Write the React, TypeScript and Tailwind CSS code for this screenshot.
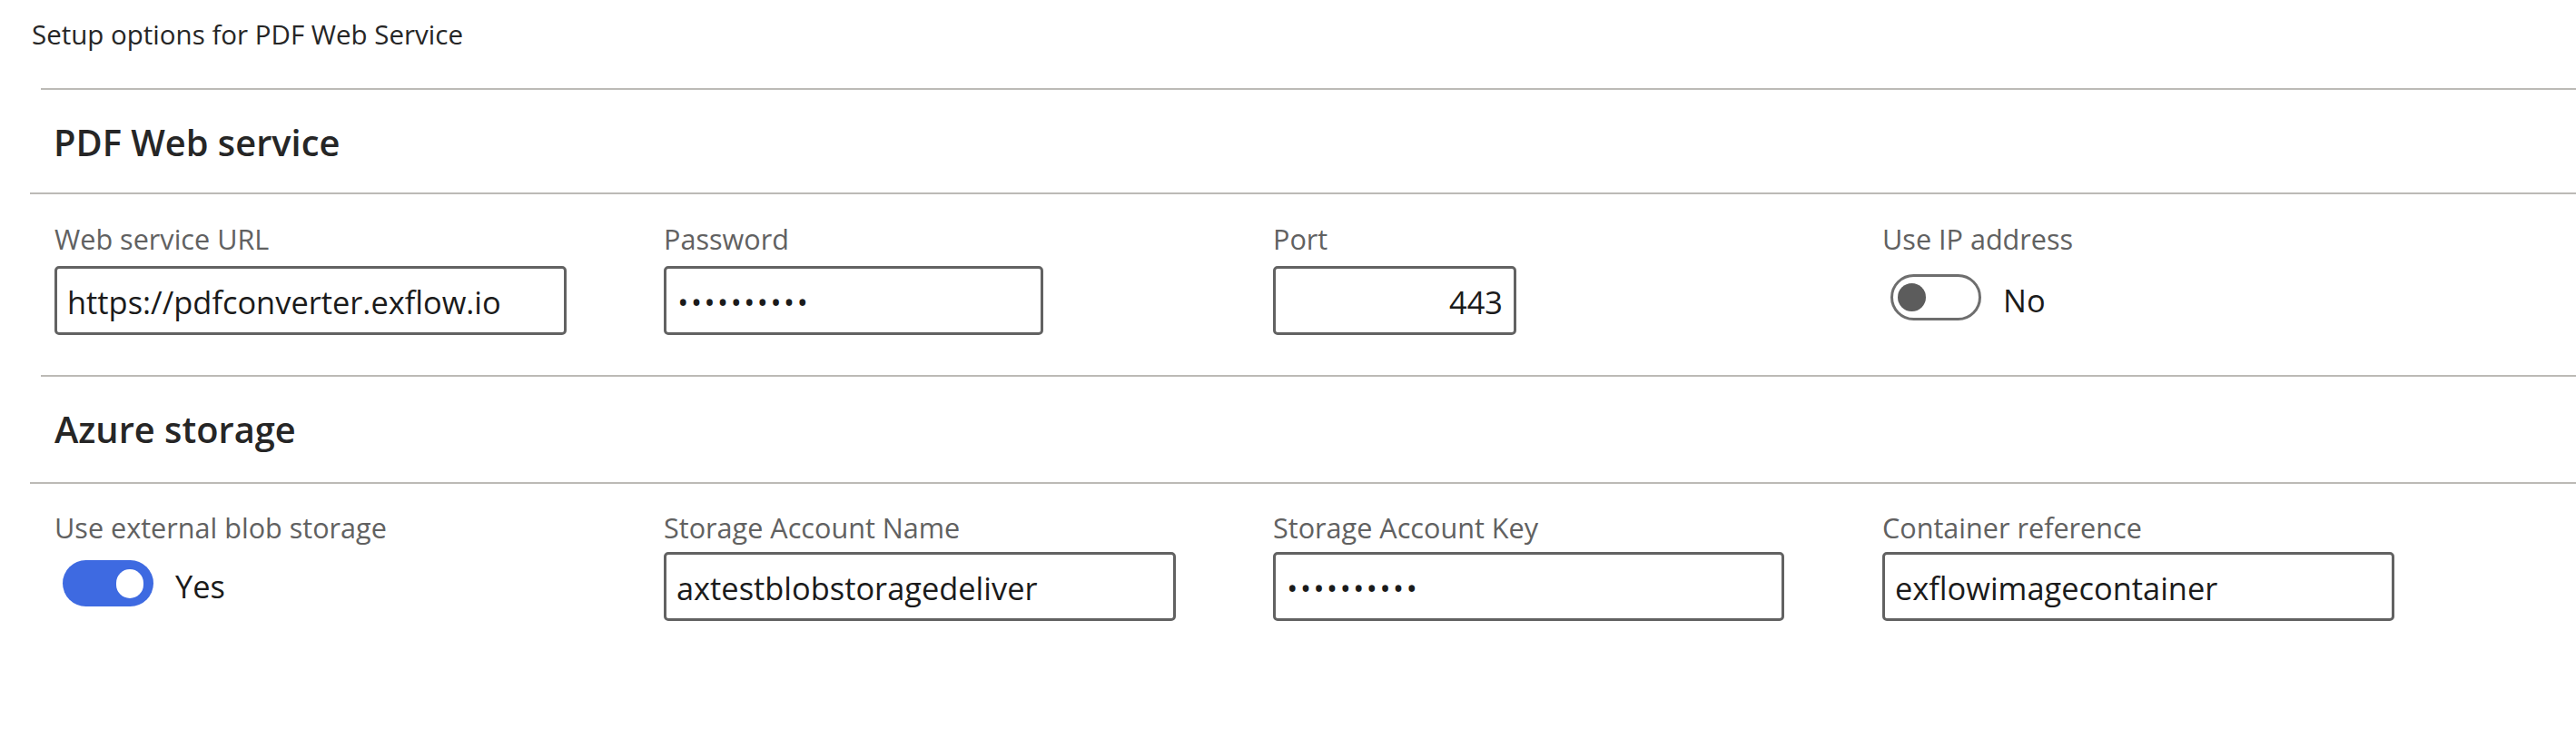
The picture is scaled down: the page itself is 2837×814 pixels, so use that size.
import React from "react";

function Label({ text }: { text: string }) {
  return (
    <div className="text-[30.6px] leading-[40px] text-[#616161] whitespace-nowrap">
      {text}
    </div>
  );
}

function Dots() {
  const items = Array.from({ length: 10 });
  return (
    <span className="flex text-[32px] leading-[40px] text-[#1b1b1b]">
      {items.map((_, i) => (
        <span key={i} className="inline-block w-[14.6px] text-center">
          •
        </span>
      ))}
    </span>
  );
}

function TextBox({
  value,
  widthClass,
  right,
  password,
}: {
  value: string;
  widthClass: string;
  right?: boolean;
  password?: boolean;
}) {
  return (
    <div
      className={
        "h-[76px] border-[3px] border-[#626262] rounded-[5px] bg-white flex items-center pt-[4px] pl-[11px] pr-[12px] whitespace-nowrap overflow-hidden " +
        widthClass +
        (right ? " justify-end" : "")
      }
    >
      {password ? (
        <Dots />
      ) : (
        <span className="text-[34.4px] leading-[44px] text-[#1b1b1b]">{value}</span>
      )}
    </div>
  );
}

function Toggle({ on }: { on: boolean }) {
  return (
    <div className="ml-[9px] flex items-start">
      {on ? (
        <div className="w-[100px] h-[51px] rounded-full bg-[#3e6ae1] flex items-center justify-end pr-[11px]">
          <div className="w-[30px] h-[32px] rounded-full bg-white" />
        </div>
      ) : (
        <div className="w-[100px] h-[51px] rounded-full border-[3px] border-[#6e6e6e] bg-white flex items-center pl-[5px]">
          <div className="w-[31px] h-[31px] rounded-full bg-[#5c5c5c]" />
        </div>
      )}
      <span className="ml-[24px] mt-[3px] text-[34.4px] leading-[51px] text-[#1b1b1b]">
        {on ? "Yes" : "No"}
      </span>
    </div>
  );
}

export default function App() {
  return (
    <div className="w-full h-[814px] bg-white overflow-hidden font-['Open_Sans',sans-serif]">
      <div className="h-[97px] pt-[18px] pl-[35px] text-[29.5px] leading-[40px] text-[#262626] whitespace-nowrap">
        Setup options for PDF Web Service
      </div>
      <div className="ml-[45px] h-[2px] bg-[#bcbab6]" />
      <div className="h-[113px] pt-[38px] pl-[59px] text-[39.8px] leading-[40px] font-semibold text-[#262626] whitespace-nowrap">
        PDF Web service
      </div>
      <div className="ml-[33px] h-[2px] bg-[#bcbab6]" />

      <div className="h-[199px] pt-[29px] pl-[60px] grid grid-cols-[564px_564px_564px_564px] gap-x-[107px] items-start">
        <div>
          <Label text="Web service URL" />
          <div className="mt-[10px]">
            <TextBox value="https://pdfconverter.exflow.io" widthClass="w-[564px]" />
          </div>
        </div>
        <div>
          <Label text="Password" />
          <div className="mt-[10px]">
            <TextBox value="" password widthClass="w-[418px]" />
          </div>
        </div>
        <div>
          <Label text="Port" />
          <div className="mt-[10px]">
            <TextBox value="443" right widthClass="w-[268px]" />
          </div>
        </div>
        <div>
          <Label text="Use IP address" />
          <div className="mt-[19px]">
            <Toggle on={false} />
          </div>
        </div>
      </div>

      <div className="ml-[45px] h-[2px] bg-[#bcbab6]" />
      <div className="h-[116px] pt-[38px] pl-[60px] text-[39.8px] leading-[40px] font-semibold text-[#262626] whitespace-nowrap">
        Azure storage
      </div>
      <div className="ml-[33px] h-[2px] bg-[#bcbab6]" />

      <div className="pt-[28px] pl-[60px] grid grid-cols-[564px_564px_564px_564px] gap-x-[107px] items-start">
        <div>
          <Label text="Use external blob storage" />
          <div className="mt-[16px]">
            <Toggle on={true} />
          </div>
        </div>
        <div>
          <Label text="Storage Account Name" />
          <div className="mt-[7px]">
            <TextBox value="axtestblobstoragedeliver" widthClass="w-[564px]" />
          </div>
        </div>
        <div>
          <Label text="Storage Account Key" />
          <div className="mt-[7px]">
            <TextBox value="" password widthClass="w-[563px]" />
          </div>
        </div>
        <div>
          <Label text="Container reference" />
          <div className="mt-[7px]">
            <TextBox value="exflowimagecontainer" widthClass="w-[564px]" />
          </div>
        </div>
      </div>
    </div>
  );
}
